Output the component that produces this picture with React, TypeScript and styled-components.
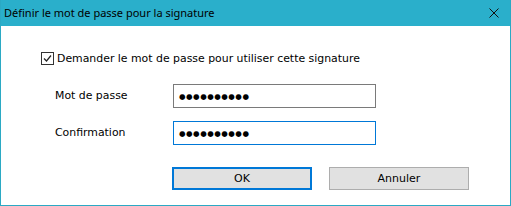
import styled, { createGlobalStyle } from "styled-components";

const GlobalStyle = createGlobalStyle`
  html, body {
    margin: 0;
    padding: 0;
    background: #ffffff;
  }
  * {
    box-sizing: border-box;
  }
`;

const App = () => {
  return (
    <>
      <GlobalStyle />
      <Window>
        <TitleBar>
          <Title>Définir le mot de passe pour la signature</Title>
          <CloseButton>
            <svg width="10" height="10" viewBox="0 0 10 10">
              <path d="M0.5 0.5 L9.5 9.5 M9.5 0.5 L0.5 9.5" stroke="#111" strokeWidth="1" fill="none" />
            </svg>
          </CloseButton>
        </TitleBar>
        <Body>
          <CheckRow>
            <CheckBox>
              <svg width="11" height="11" viewBox="0 0 11 11">
                <path d="M2 5.5 L4.5 8 L9 2.5" stroke="#222" strokeWidth="1.2" fill="none" />
              </svg>
            </CheckBox>
            <Text>Demander le mot de passe pour utiliser cette signature</Text>
          </CheckRow>
          <Form>
            <Label>Mot de passe</Label>
            <Field>
              <Dots>●●●●●●●●●●</Dots>
            </Field>
            <Label>Confirmation</Label>
            <Field focused>
              <Dots>●●●●●●●●●●</Dots>
            </Field>
          </Form>
          <Buttons>
            <Button primary>OK</Button>
            <Button>Annuler</Button>
          </Buttons>
        </Body>
      </Window>
    </>
  );
};

export default App;

const Window = styled.div`
  width: 511px;
  height: 206px;
  border: 1px solid #2ba9c4;
  border-top: none;
  display: flex;
  flex-direction: column;
  background: #ffffff;
`;

const TitleBar = styled.div`
  height: 26px;
  background: #2aafcb;
  display: flex;
  align-items: center;
  justify-content: space-between;
  padding-left: 3px;
  padding-right: 11px;
`;

const Title = styled.div`
  font-family: "Noto Sans", "Open Sans", sans-serif;
  font-size: 11px;
  color: #000;
  padding-bottom: 1px;
`;

const CloseButton = styled.div`
  width: 10px;
  height: 10px;
  display: flex;
`;

const Body = styled.div`
  flex: 1;
  padding: 26px 0 0 40px;
  display: flex;
  flex-direction: column;
  font-family: "DejaVu Sans", Tahoma, sans-serif;
  font-size: 10.9px;
  color: #000;
`;

const CheckRow = styled.div`
  display: flex;
  align-items: center;
  gap: 3px;
  height: 13px;
`;

const CheckBox = styled.div`
  width: 13px;
  height: 13px;
  border: 1px solid #333;
  display: flex;
  align-items: center;
  justify-content: center;
`;

const Text = styled.span`
  line-height: 13px;
`;

const Form = styled.div`
  display: grid;
  grid-template-columns: 118px 203px;
  row-gap: 13px;
  align-items: center;
  margin-top: 19px;
  padding-left: 14px;
`;

const Label = styled.div`
  padding-bottom: 2px;
`;

const Field = styled.div<{ focused?: boolean }>`
  height: 24px;
  border: 1px solid ${({ focused }) => (focused ? "#0078d7" : "#7a7a7a")};
  display: flex;
  align-items: center;
  padding-left: 5px;
`;

const Dots = styled.span`
  font-family: "DejaVu Sans", sans-serif;
  font-size: 7.5px;
  letter-spacing: 0.5px;
  color: #000;
`;

const Buttons = styled.div`
  display: flex;
  gap: 17px;
  margin-top: 22px;
  padding-left: 131px;
`;

const Button = styled.div<{ primary?: boolean }>`
  width: 140px;
  height: 23px;
  background: #e1e1e1;
  border: ${({ primary }) => (primary ? "2px solid #0078d7" : "1px solid #adadad")};
  display: flex;
  align-items: center;
  justify-content: center;
  font-size: 11px;
`;
